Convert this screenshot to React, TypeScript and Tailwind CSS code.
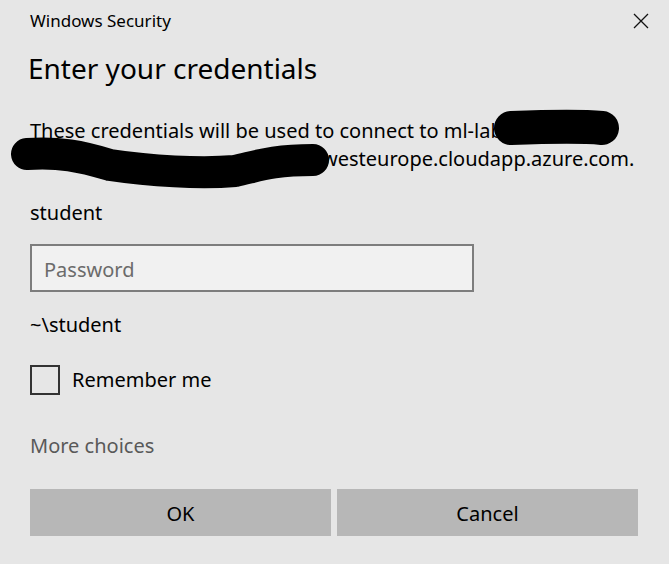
import React from "react";

const font = { fontFamily: '"Noto Sans", "Open Sans", sans-serif' };

function CloseIcon() {
  return (
    <svg width="16" height="16" viewBox="0 0 16 16" className="block">
      <path d="M1 1 L15 15 M15 1 L1 15" stroke="#111" strokeWidth="1.3" fill="none" />
    </svg>
  );
}

/** 伏せ字の黒塗り。本文の上に重ねる。 */
function Redactions() {
  return (
    <svg
      className="pointer-events-none absolute inset-0"
      width="669"
      height="564"
      viewBox="0 0 669 564"
    >
      <path
        d="M511 128 C540 127 580 126 602 128"
        stroke="#000"
        strokeWidth="34"
        strokeLinecap="round"
        fill="none"
      />
      <path
        d="M27 154 C60 152 80 156 110 165 C150 171 200 174 235 171 C255 167 270 160 313 160"
        stroke="#000"
        strokeWidth="32"
        strokeLinecap="round"
        fill="none"
      />
    </svg>
  );
}

export default function App() {
  return (
    <div
      className="relative h-[564px] w-[669px] overflow-hidden bg-[#e6e6e6] pl-[30px] pr-[20px] text-black"
      style={font}
    >
      <div className="flex h-[42px] items-center justify-between">
        <span className="text-[17px]">Windows Security</span>
        <CloseIcon />
      </div>

      <h1 className="-ml-[2px] mt-[6px] h-[40px] text-[28px] leading-[40px]">Enter your credentials</h1>

      <div className="mt-[29px] text-[20px] leading-[28px]">
        <p className="whitespace-nowrap">These credentials will be used to connect to ml-lab</p>
        <p className="whitespace-nowrap">
          <span className="inline-block w-[292px]" />
          westeurope.cloudapp.azure.com.
        </p>
      </div>

      <p className="mt-[26px] text-[20px] leading-[28px]">student</p>

      <div className="mt-[17px] flex h-[48px] w-[444px] items-center border-2 border-[#7d7d7d] bg-[#f1f1f1] px-[12px] pt-[3px]">
        <span className="text-[20px] text-[#6b6b6b]">Password</span>
      </div>

      <p className="mt-[19px] text-[20px] leading-[28px]">~\student</p>

      <label className="mt-[26px] flex h-[30px] items-center gap-[12px]">
        <span className="box-border block size-[30px] border-2 border-[#333]" />
        <span className="text-[20px]">Remember me</span>
      </label>

      <p className="mt-[37px] text-[20px] leading-[28px] text-[#595959]">More choices</p>

      <div className="mt-[29px] flex w-[608px] gap-[6px]">
        <button className="h-[47px] flex-1 bg-[#b7b7b7] pt-[2px] text-[20px]">OK</button>
        <button className="h-[47px] flex-1 bg-[#b7b7b7] pt-[2px] text-[20px]">Cancel</button>
      </div>

      <Redactions />
    </div>
  );
}
